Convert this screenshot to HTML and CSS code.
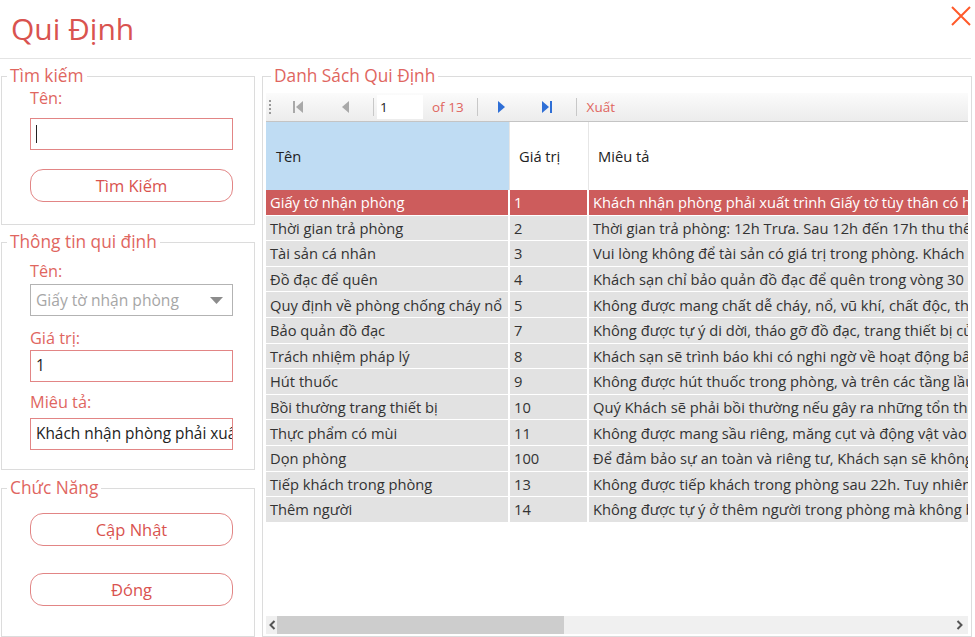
FILE: index.html
```html
<!DOCTYPE html>
<html lang="vi">
<head>
<meta charset="utf-8">
<title>Qui Định</title>
<link rel="stylesheet" href="styles.css">
</head>
<body>
<div class="window">
  <header class="titlebar">
    <h1 class="title">Qui Định</h1>
    <button class="close" aria-label="Đóng">
      <svg width="20" height="20" viewBox="0 0 20 20"><path d="M1 1 L19 19 M19 1 L1 19" stroke="#ff5a2a" stroke-width="2" fill="none"/></svg>
    </button>
  </header>
  <div class="main">
    <div class="left">
      <fieldset class="group g-search">
        <legend>Tìm kiếm</legend>
        <div class="body">
          <label class="lbl l1">Tên:</label>
          <div class="input i1"><span class="caret"></span></div>
          <button class="btn b1">Tìm Kiếm</button>
        </div>
      </fieldset>
      <fieldset class="group g-info">
        <legend>Thông tin qui định</legend>
        <div class="body">
          <label class="lbl l2">Tên:</label>
          <div class="combo"><span class="combo-text">Giấy tờ nhận phòng</span><svg class="tri" width="13" height="7" viewBox="0 0 13 7"><path d="M0 0 H13 L6.5 7 Z" fill="#8c8c8c"/></svg></div>
          <label class="lbl l3">Giá trị:</label>
          <div class="input i2">1</div>
          <label class="lbl l4">Miêu tả:</label>
          <div class="input i3">Khách nhận phòng phải xuất trình</div>
        </div>
      </fieldset>
      <fieldset class="group g-func">
        <legend>Chức Năng</legend>
        <div class="body">
          <button class="btn b2">Cập Nhật</button>
          <button class="btn b3">Đóng</button>
        </div>
      </fieldset>
    </div>
    <fieldset class="group g-list">
      <legend>Danh Sách Qui Định</legend>
      <div class="grid">
        <div class="toolbar">
          <span class="grip"></span>
          <span class="tb-btn tb-first"><svg width="11" height="12" viewBox="0 0 11 12"><rect x="0" y="0" width="2" height="12" fill="#a9a9a9"/><path d="M10 0 V12 L3 6 Z" fill="#a9a9a9"/></svg></span>
          <span class="tb-btn tb-prev"><svg width="7" height="12" viewBox="0 0 7 12"><path d="M7 0 V12 L0 6 Z" fill="#a9a9a9"/></svg></span>
          <span class="sep s1"></span>
          <span class="pos">1</span>
          <span class="of">of 13</span>
          <span class="sep s2"></span>
          <span class="tb-btn tb-next"><svg width="7" height="12" viewBox="0 0 7 12"><path d="M0 0 V12 L7 6 Z" fill="#2f6fd6"/></svg></span>
          <span class="tb-btn tb-last"><svg width="11" height="12" viewBox="0 0 11 12"><path d="M0 0 V12 L7 6 Z" fill="#2f6fd6"/><rect x="8" y="0" width="2" height="12" fill="#2f6fd6"/></svg></span>
          <span class="sep s3"></span>
          <span class="export">Xuất</span>
        </div>
        <div class="table-wrap">
          <table class="table">
            <colgroup><col class="c1"><col class="c2"><col class="c3"></colgroup>
            <thead>
              <tr><th class="h-sel">Tên</th><th>Giá trị</th><th>Miêu tả</th></tr>
            </thead>
            <tbody>
              <tr class="sel"><td>Giấy tờ nhận phòng</td><td>1</td><td>Khách nhận phòng phải xuất trình Giấy tờ tùy thân có hiệu lực</td></tr>
              <tr><td>Thời gian trả phòng</td><td>2</td><td>Thời gian trả phòng: 12h Trưa. Sau 12h đến 17h thu thêm 50%</td></tr>
              <tr><td>Tài sản cá nhân</td><td>3</td><td>Vui lòng không để tài sản có giá trị trong phòng. Khách sạn</td></tr>
              <tr><td>Đồ đạc để quên</td><td>4</td><td>Khách sạn chỉ bảo quản đồ đạc để quên trong vòng 30 ngày</td></tr>
              <tr><td>Quy định về phòng chống cháy nổ</td><td>5</td><td>Không được mang chất dễ cháy, nổ, vũ khí, chất độc, thuốc</td></tr>
              <tr><td>Bảo quản đồ đạc</td><td>7</td><td>Không được tự ý di dời, tháo gỡ đồ đạc, trang thiết bị của</td></tr>
              <tr><td>Trách nhiệm pháp lý</td><td>8</td><td>Khách sạn sẽ trình báo khi có nghi ngờ về hoạt động bất hợp</td></tr>
              <tr><td>Hút thuốc</td><td>9</td><td>Không được hút thuốc trong phòng, và trên các tầng lầu</td></tr>
              <tr><td>Bồi thường trang thiết bị</td><td>10</td><td>Quý Khách sẽ phải bồi thường nếu gây ra những tổn thất</td></tr>
              <tr><td>Thực phẩm có mùi</td><td>11</td><td>Không được mang sầu riêng, măng cụt và động vật vào phòng</td></tr>
              <tr><td>Dọn phòng</td><td>100</td><td>Để đảm bảo sự an toàn và riêng tư, Khách sạn sẽ không</td></tr>
              <tr><td>Tiếp khách trong phòng</td><td>13</td><td>Không được tiếp khách trong phòng sau 22h. Tuy nhiên</td></tr>
              <tr><td>Thêm người</td><td>14</td><td>Không được tự ý ở thêm người trong phòng mà không báo</td></tr>
            </tbody>
          </table>
        </div>
        <div class="hscroll">
          <svg class="arr" width="7" height="10" viewBox="0 0 7 10"><path d="M5.5 1 L1.5 5 L5.5 9" stroke="#555" stroke-width="2" fill="none"/></svg>
          <span class="thumb"></span>
          <span class="track"></span>
          <svg class="arr" width="7" height="10" viewBox="0 0 7 10"><path d="M1.5 1 L5.5 5 L1.5 9" stroke="#555" stroke-width="2" fill="none"/></svg>
        </div>
      </div>
    </fieldset>
  </div>
</div>
</body>
</html>
```

FILE: styles.css
```css
* { box-sizing: border-box; }
html, body { margin: 0; padding: 0; }
body {
  width: 975px;
  height: 637px;
  overflow: hidden;
  background: #fff;
  font-family: "Open Sans", "Noto Sans", sans-serif;
  color: #333;
}
.window { width: 975px; height: 637px; display: flex; flex-direction: column; }

.titlebar {
  height: 59px;
  width: 971px;
  border-bottom: 1px solid #e4e4e4;
  display: flex;
  justify-content: space-between;
  align-items: flex-start;
  flex: none;
}
.title {
  margin: 0;
  padding-left: 11px;
  font-weight: 400;
  font-size: 30px;
  line-height: 58px;
  color: #d9534f;
}
.close {
  border: 0;
  background: none;
  padding: 0;
  margin: 6px 0 0 0;
  width: 20px;
  height: 20px;
}
.close svg { display: block; }

.main { flex: 1; display: flex; gap: 7px; min-height: 0; }
.left { width: 255px; flex: none; display: flex; flex-direction: column; }

.group {
  margin: 6px 0 0 0;
  padding: 0;
  border: 1px solid #dcdcdc;
  min-width: 0;
}
.group legend {
  padding: 0 3px;
  margin-left: 5px;
  font-size: 17.3px;
  line-height: 22px;
  color: #e0665f;
}
.left .group { margin-left: 1px; width: 254px; }
.g-func { margin-top: 7px; flex: 1; }

.body { padding: 0 0 0 28px; display: flex; flex-direction: column; align-items: flex-start; }
.g-search .body { padding-top: 1px; padding-bottom: 22px; }
.g-info .body { padding-top: 8px; padding-bottom: 19px; }

.lbl {
  font-size: 16.3px;
  line-height: 20px;
  height: 20px;
  color: #e0665f;
}
.l3 { margin-top: 12px; }
.l4 { margin-top: 10px; }

.input {
  width: 203px;
  height: 32px;
  border: 1.5px solid #e28585;
  font-size: 15.4px;
  line-height: 29px;
  padding-left: 5px;
  color: #222;
  white-space: nowrap;
  overflow: hidden;
}
.i1 { margin-top: 10px; display: flex; align-items: center; }
.i2 { margin-top: 2px; }
.i3 { margin-top: 6px; }
.caret { width: 1px; height: 18px; background: #222; }

.combo {
  margin-top: 3px;
  width: 203px;
  height: 32px;
  border: 1.5px solid #b3b3b3;
  display: flex;
  align-items: center;
  justify-content: space-between;
  padding: 0 9px 0 5px;
  font-size: 15.6px;
  color: #a6a6a6;
}
.tri { display: block; }

.btn {
  width: 203px;
  height: 33px;
  border: 1.5px solid #e28585;
  border-radius: 13px;
  background: #fff;
  font-family: inherit;
  font-size: 16.5px;
  color: #d9534f;
  padding: 0;
}
.b1 { margin-top: 19px; }
.b2 { margin-top: 14px; }
.b3 { margin-top: 27px; }

.g-list { width: 710px; flex: none; display: flex; flex-direction: column; }
.g-list legend { margin-left: 8px; }
.grid {
  flex: 1;
  display: flex;
  flex-direction: column;
  padding: 6px 3px 0 3px;
  min-height: 0;
}
.toolbar {
  height: 29px;
  flex: none;
  display: flex;
  align-items: center;
  background: linear-gradient(#fbfbfb, #ececec);
  border-bottom: 1px solid #c4c4c4;
  font-size: 13.5px;
}
.grip {
  width: 2px;
  height: 16px;
  margin-left: 3px;
  background: radial-gradient(circle, #9a9a9a 0.8px, transparent 1.2px) 0 0 / 2px 4px;
}
.tb-btn { display: flex; align-items: center; }
.tb-btn svg { display: block; }
.tb-first { margin-left: 22px; }
.tb-prev { margin-left: 38px; }
.sep { width: 1px; height: 18px; background: #c8c8c8; }
.s1 { margin-left: 24px; }
.pos {
  margin-left: 3px;
  width: 46px;
  height: 24px;
  background: #fff;
  line-height: 24px;
  padding-left: 3px;
  color: #222;
}
.of { margin-left: 9px; color: #e0665f; }
.s2 { margin-left: 13px; }
.tb-next { margin-left: 20px; }
.tb-last { margin-left: 37px; }
.s3 { margin-left: 23px; }
.export { margin-left: 10px; color: #e0665f; }

.table-wrap { flex: 1; overflow: hidden; min-height: 0; }
.table {
  border-collapse: separate;
  border-spacing: 0;
  table-layout: fixed;
  width: 960px;
  font-size: 14.7px;
}
.c1 { width: 244px; }
.c2 { width: 79px; }
.c3 { width: 637px; }
.table th {
  height: 68px;
  font-weight: 400;
  text-align: left;
  padding: 0 0 0 9px;
  color: #222;
  border-right: 1px solid #e6e6e6;
  background: #fff;
}
.table th.h-sel { background: #bfdcf3; padding-left: 10px; }
.table td {
  height: 25.6px;
  padding: 0 0 0 4px;
  background: #e2e2e2;
  border-right: 2px solid #fff;
  border-bottom: 1.5px solid #fff;
  white-space: nowrap;
  overflow: hidden;
  color: #333;
}
.table tr.sel td { background: #cd5c5c; color: #fff; }

.hscroll {
  height: 18px;
  flex: none;
  margin-bottom: 2px;
  background: #f0f0f0;
  display: flex;
  align-items: center;
  padding: 0 5px 0 3px;
}
.arr { display: block; flex: none; }
.thumb { margin-left: 1px; width: 287px; height: 18px; background: #cdcdcd; }
.track { flex: 1; }
```
